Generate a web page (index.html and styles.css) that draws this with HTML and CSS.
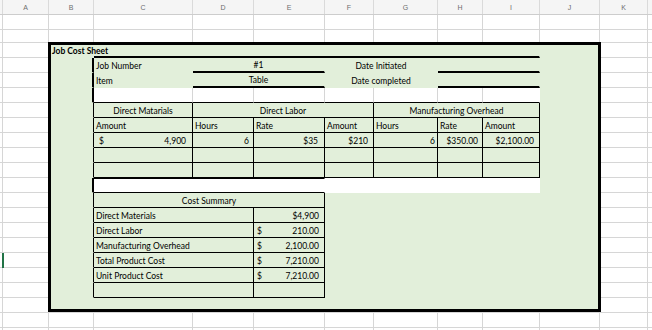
FILE: index.html
```html
<!DOCTYPE html>
<html>
<head>
<meta charset="utf-8">
<link rel="stylesheet" href="styles.css">
</head>
<body>
<div class="colheads">
  <div class="ch ch-stub"></div>
  <div class="ch ch-a">A</div>
  <div class="ch ch-b">B</div>
  <div class="ch ch-c">C</div>
  <div class="ch ch-d">D</div>
  <div class="ch ch-e">E</div>
  <div class="ch ch-f">F</div>
  <div class="ch ch-g">G</div>
  <div class="ch ch-h">H</div>
  <div class="ch ch-i">I</div>
  <div class="ch ch-j">J</div>
  <div class="ch ch-k">K</div>
  <div class="ch ch-l"></div>
</div>
<div class="sheet">
  <div class="rowhead"><div class="marker"></div></div>
  <div class="area">
    <div class="form">
      <!-- row 3 -->
      <div class="c title">Job Cost Sheet</div>
      <div class="c s7 bb2"></div>
      <div class="c"></div>
      <!-- row 4 -->
      <div class="c br2"></div>
      <div class="c">Job Number</div>
      <div class="c s2 bb2 ctr">#1</div>
      <div class="c s2 ctr">Date Initiated</div>
      <div class="c s2 bb2"></div>
      <div class="c"></div>
      <!-- row 5 -->
      <div class="c br2"></div>
      <div class="c">Item</div>
      <div class="c s2 bb2 ctr">Table</div>
      <div class="c s2 ctr">Date completed</div>
      <div class="c s2 bb2"></div>
      <div class="c"></div>
      <!-- row 6 -->
      <div class="c br2"></div>
      <div class="c white gr bb"></div>
      <div class="c white gr bb"></div>
      <div class="c white gr bb"></div>
      <div class="c white gr bb"></div>
      <div class="c white gr bb"></div>
      <div class="c white gr bb"></div>
      <div class="c white bb"></div>
      <div class="c"></div>
      <!-- row 7 -->
      <div class="c br"></div>
      <div class="c br bb ctr">Direct Matarials</div>
      <div class="c s3 br bb ctr">Direct Labor</div>
      <div class="c s3 br bb ctr">Manufacturing Overhead</div>
      <div class="c"></div>
      <!-- row 8 -->
      <div class="c br"></div>
      <div class="c br bb">Amount</div>
      <div class="c br bb">Hours</div>
      <div class="c br bb">Rate</div>
      <div class="c br bb">Amount</div>
      <div class="c br bb">Hours</div>
      <div class="c br bb">Rate</div>
      <div class="c br bb">Amount</div>
      <div class="c"></div>
      <!-- row 9 -->
      <div class="c br"></div>
      <div class="c br bb acct acct-c"><span>$</span><span>4,900</span></div>
      <div class="c br bb rt pr4">6</div>
      <div class="c br bb rt pr6">$35</div>
      <div class="c br bb rt pr5">$210</div>
      <div class="c br bb rt pr2">6</div>
      <div class="c br bb rt pr4">$350.00</div>
      <div class="c br bb rt pr5">$2,100.00</div>
      <div class="c"></div>
      <!-- row 10 -->
      <div class="c br"></div>
      <div class="c br bb"></div>
      <div class="c br bb"></div>
      <div class="c br bb"></div>
      <div class="c br bb"></div>
      <div class="c br bb"></div>
      <div class="c br bb"></div>
      <div class="c br bb"></div>
      <div class="c"></div>
      <!-- row 11 -->
      <div class="c br"></div>
      <div class="c br bb"></div>
      <div class="c br bb"></div>
      <div class="c br bb"></div>
      <div class="c br bb"></div>
      <div class="c br bb"></div>
      <div class="c br bb"></div>
      <div class="c br bb"></div>
      <div class="c"></div>
      <!-- row 12 -->
      <div class="c br2"></div>
      <div class="c s3 white bt bb"></div>
      <div class="c s4 white"></div>
      <div class="c"></div>
      <!-- row 13 -->
      <div class="c br"></div>
      <div class="c s3 br bb ctr">Cost Summary</div>
      <div class="c s5"></div>
      <!-- row 14 -->
      <div class="c br"></div>
      <div class="c s2 br bb">Direct Materials</div>
      <div class="c br bb rt pr5">$4,900</div>
      <div class="c s5"></div>
      <!-- row 15 -->
      <div class="c br"></div>
      <div class="c s2 br bb">Direct Labor</div>
      <div class="c br bb acct acct-e"><span>$</span><span>210.00</span></div>
      <div class="c s5"></div>
      <!-- row 16 -->
      <div class="c br"></div>
      <div class="c s2 br bb">Manufacturing Overhead</div>
      <div class="c br bb acct acct-e"><span>$</span><span>2,100.00</span></div>
      <div class="c s5"></div>
      <!-- row 17 -->
      <div class="c br"></div>
      <div class="c s2 br bb">Total Product Cost</div>
      <div class="c br bb acct acct-e"><span>$</span><span>7,210.00</span></div>
      <div class="c s5"></div>
      <!-- row 18 -->
      <div class="c br"></div>
      <div class="c s2 br bb">Unit Product Cost</div>
      <div class="c br bb acct acct-e"><span>$</span><span>7,210.00</span></div>
      <div class="c s5"></div>
      <!-- row 19 -->
      <div class="c br"></div>
      <div class="c s2 br bb"></div>
      <div class="c br bb"></div>
      <div class="c s5"></div>
      <!-- row 20 -->
      <div class="c s9"></div>
    </div>
  </div>
</div>
</body>
</html>
```
FILE: styles.css
```css
* { box-sizing: border-box; }
html, body { margin: 0; padding: 0; background: #fff; }
body {
  width: 652px;
  height: 330px;
  overflow: hidden;
  font-family: Lato, "Liberation Sans", sans-serif;
}

/* column header strip */
.colheads {
  display: flex;
  height: 15px;
  background: #f5f5f5;
  border-bottom: 1px solid #cdcdcd;
}
.ch {
  flex: none;
  display: flex;
  align-items: center;
  justify-content: center;
  border-right: 1px solid #dadada;
  font-family: "Liberation Sans", sans-serif;
  font-size: 7px;
  color: #6e6e6e;
}
.ch-stub { width: 3px; }
.ch-a { width: 46px; }
.ch-b { width: 45px; }
.ch-c { width: 99px; }
.ch-d { width: 61px; }
.ch-e { width: 71px; }
.ch-f { width: 49px; }
.ch-g { width: 64px; }
.ch-h { width: 45px; }
.ch-i { width: 57px; }
.ch-j { width: 60px; }
.ch-k { width: 48px; }
.ch-l { flex: 1; border-right: 0; }

/* sheet body with its gridlines */
.sheet {
  display: flex;
  height: 315px;
  background:
    linear-gradient(#d6d6d6, #d6d6d6) 2px 0 / 1px 100% no-repeat,
    linear-gradient(#d6d6d6, #d6d6d6) 48px 0 / 1px 100% no-repeat,
    linear-gradient(#d6d6d6, #d6d6d6) 93px 0 / 1px 100% no-repeat,
    linear-gradient(#d6d6d6, #d6d6d6) 192px 0 / 1px 100% no-repeat,
    linear-gradient(#d6d6d6, #d6d6d6) 253px 0 / 1px 100% no-repeat,
    linear-gradient(#d6d6d6, #d6d6d6) 324px 0 / 1px 100% no-repeat,
    linear-gradient(#d6d6d6, #d6d6d6) 373px 0 / 1px 100% no-repeat,
    linear-gradient(#d6d6d6, #d6d6d6) 437px 0 / 1px 100% no-repeat,
    linear-gradient(#d6d6d6, #d6d6d6) 482px 0 / 1px 100% no-repeat,
    linear-gradient(#d6d6d6, #d6d6d6) 539px 0 / 1px 100% no-repeat,
    linear-gradient(#d6d6d6, #d6d6d6) 599px 0 / 1px 100% no-repeat,
    linear-gradient(#d6d6d6, #d6d6d6) 647px 0 / 1px 100% no-repeat,
    linear-gradient(#d6d6d6, #d6d6d6) 0 14px / 100% 1px no-repeat,
    repeating-linear-gradient(#d6d6d6 0 1px, transparent 1px 15px) 0 27px / 100% 300px no-repeat;
}
.rowhead { width: 3px; flex: none; }
.marker {
  width: 2px;
  height: 15px;
  margin: 238px 0 0 2px;
  background: #217346;
}
.area {
  flex: 1;
  padding: 27px 0 0 45px;
}

/* the job cost sheet block */
.form {
  width: 553px;
  height: 270px;
  border: 3px solid #000;
  background: #e2efda;
  display: grid;
  grid-template-columns: 43px 99px 61px 71px 49px 64px 45px 57px 58px;
  grid-template-rows: 13px repeat(16, 15px) 11px;
}
.c {
  display: flex;
  align-items: flex-end;
  min-width: 0;
  padding: 0 2px;
  border-right: 1px solid transparent;
  border-bottom: 1px solid transparent;
  font-size: 8.5px;
  line-height: 11px;
  color: #000;
  white-space: nowrap;
}
.title { font-weight: 700; padding-left: 1px; }

.s2 { grid-column: span 2; }
.s3 { grid-column: span 3; }
.s4 { grid-column: span 4; }
.s5 { grid-column: span 5; }
.s7 { grid-column: span 7; }
.s9 { grid-column: span 9; }

.br { border-right-color: #000; }
.br2 { border-right: 2px solid #000; }
.bb { border-bottom-color: #000; }
.bb2 { border-bottom: 2px solid #000; }
.bt { border-top: 1px solid #000; }
.gr { border-right-color: #d6d6d6; }
.white { background: #fff; }

.ctr { justify-content: center; }
.rt { justify-content: flex-end; }
.pr2 { padding-right: 2px; }
.pr4 { padding-right: 4px; }
.pr5 { padding-right: 5px; }
.pr6 { padding-right: 6px; }
.acct { justify-content: space-between; }
.acct-c { padding-left: 5px; padding-right: 6px; }
.acct-e { padding-left: 3px; padding-right: 5px; }
```
